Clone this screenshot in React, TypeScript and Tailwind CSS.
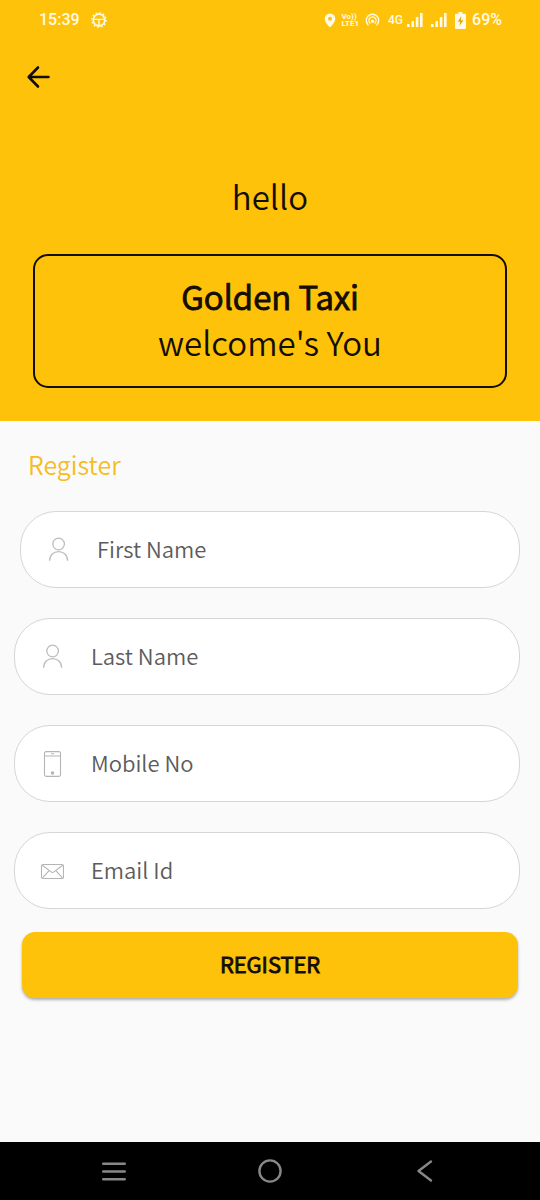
import type { ReactNode } from "react";

function GearIcon() {
  return (
    <svg width="16" height="16" viewBox="0 0 16 16" fill="none" stroke="#fffae8" aria-hidden="true">
      <circle cx="8" cy="8" r="5.8" strokeWidth="1.7" />
      <circle cx="8" cy="8" r="7.2" strokeWidth="1.2" strokeDasharray="1.885 1.885" />
      <path d="M2.5 7.4H13.5M8 7.4V13.5" strokeWidth="1.4" />
    </svg>
  );
}

function PinIcon() {
  return (
    <svg width="12" height="15" viewBox="0 0 12 15" aria-hidden="true">
      <path
        d="M6 .5A5.3 5.3 0 0 0 .7 5.8C.7 9.5 6 14.5 6 14.5s5.3-5 5.3-8.7A5.3 5.3 0 0 0 6 .5Zm0 3.3a2 2 0 1 1 0 4 2 2 0 0 1 0-4Z"
        fill="#fffae8"
        fillRule="evenodd"
      />
    </svg>
  );
}

function HotspotIcon() {
  return (
    <svg width="15" height="14" viewBox="0 0 16 14" fill="none" stroke="#fffae8" strokeWidth="1.4" strokeLinecap="round" aria-hidden="true">
      <path d="M3.2 12A6.6 6.6 0 1 1 12.8 12" />
      <path d="M5.3 10.2A3.8 3.8 0 1 1 10.7 10.2" />
      <circle cx="8" cy="8.2" r="1" fill="#fffae8" />
    </svg>
  );
}

function SignalIcon() {
  return (
    <svg width="16" height="14" viewBox="0 0 16 14" fill="#fffae8" aria-hidden="true">
      <rect x="0" y="11" width="2.6" height="3" />
      <rect x="4.4" y="8" width="2.6" height="6" />
      <rect x="8.8" y="4" width="2.6" height="10" />
      <rect x="13" y="0" width="2.6" height="14" />
    </svg>
  );
}

function BatteryIcon() {
  return (
    <svg width="11" height="17" viewBox="0 0 11 17" aria-hidden="true">
      <path d="M3.5 0h4v1.8H10a1 1 0 0 1 1 1V16a1 1 0 0 1-1 1H1a1 1 0 0 1-1-1V2.8a1 1 0 0 1 1-1h2.5Z" fill="#fffae8" />
      <path d="M6.3 4 2.8 9.8h2.3L4.6 14l3.7-5.8H5.9Z" fill="#e0a90c" />
    </svg>
  );
}

function PersonIcon() {
  return (
    <svg width="24" height="26" viewBox="0 0 24 26" fill="none" stroke="#bdbdbd" strokeWidth="1.3" aria-hidden="true">
      <circle cx="12.6" cy="7" r="5.8" />
      <path d="M3.6 23.8C3.6 17.8 7.6 14.6 12.6 14.6S21.6 17.8 21.6 23.8" />
    </svg>
  );
}

function PhoneIcon() {
  return (
    <svg width="24" height="26" viewBox="0 0 24 26" fill="none" stroke="#b5b5b5" strokeWidth="1.1" aria-hidden="true">
      <rect x="4.5" y=".6" width="16" height="24.8" rx="1.6" />
      <path d="M4.5 5H20.5M11 2.8H14" />
      <circle cx="12.5" cy="22" r="1.2" fill="#b5b5b5" />
    </svg>
  );
}

function MailIcon() {
  return (
    <svg width="24" height="26" viewBox="0 0 24 26" fill="none" stroke="#b5b5b5" strokeWidth="1.1" aria-hidden="true">
      <rect x="1.5" y="6.5" width="22" height="14" rx="1.6" />
      <path d="M2.3 7.3 11.1 13.9Q12.5 15.1 13.9 13.9L22.7 7.3M2.5 19.9 9.1 12.7M22.5 19.9 15.9 12.7" />
    </svg>
  );
}

type FieldProps = { id: string; label: string; type: string; icon: ReactNode; inset?: boolean };

function Field({ id, label, type, icon, inset }: FieldProps) {
  return (
    <div
      className={`${inset ? "ml-[6px]" : ""} flex h-[77px] items-center gap-[27px] rounded-[36px] border border-[#d6d6d6] bg-white pr-6 pl-[25px]`}
    >
      <label htmlFor={id} aria-label={label} className="shrink-0">
        {icon}
      </label>
      <input
        id={id}
        type={type}
        placeholder={label}
        className="h-10 min-w-0 flex-1 bg-transparent pb-1 text-[22px] font-[350] text-[#444] outline-none placeholder:text-[#5c5c5c]"
      />
    </div>
  );
}

export default function App() {
  return (
    <div className="flex min-h-screen flex-col bg-[#fafafa] font-['Noto_Sans_CJK_SC','Noto_Sans',sans-serif] text-[#140d02]">
      <header className="bg-[#ffc20a] pb-[33px]">
        <div className="flex h-10 items-center justify-between pr-[38px] pl-[39px] font-[Roboto,sans-serif] text-[#fffae8]">
          <div className="flex items-center gap-[11px]">
            <span className="text-base font-medium">15:39</span>
            <GearIcon />
          </div>
          <div className="flex items-center">
            <PinIcon />
            <span className="mr-1.5 ml-1.5 flex flex-col text-[8px] leading-[7px] font-bold">
              <span>Vo))</span>
              <span>LTE1</span>
            </span>
            <HotspotIcon />
            <span className="mr-1 ml-2 text-xs font-medium">4G</span>
            <SignalIcon />
            <span className="mr-2 ml-2">
              <SignalIcon />
            </span>
            <BatteryIcon />
            <span className="ml-1.5 text-base font-medium">69%</span>
          </div>
        </div>
        <button type="button" aria-label="Back" className="mt-[25px] ml-[26px] block">
          <svg width="24" height="24" viewBox="0 0 24 24" fill="none" stroke="#140d02" strokeWidth="2.6" strokeLinecap="round" strokeLinejoin="round" aria-hidden="true">
            <path d="M22.5 12H3M12 2.5 2.7 12 12 21.5" />
          </svg>
        </button>
        <p className="mt-[84px] text-center text-[33px] leading-[46px] font-[350]">hello</p>
        <div className="mx-[33px] mt-[35px] rounded-[15px] border-2 border-[#140d02] pt-[17px] pb-[21px] text-center text-[33px] leading-[46px]">
          <h1 className="font-[350] [-webkit-text-stroke:1px]">Golden Taxi</h1>
          <p className="font-[350]">welcome's You</p>
        </div>
      </header>

      <main className="flex-1">
        <h2 className="mt-[25px] ml-7 text-[25px] leading-9 font-[350] text-[#f5bd1f]">Register</h2>
        <form onSubmit={(event) => event.preventDefault()}>
          <div className="mt-[29px] mr-5 ml-3.5 flex flex-col gap-[30px]">
            <Field id="first-name" label="First Name" type="text" icon={<PersonIcon />} inset />
            <Field id="last-name" label="Last Name" type="text" icon={<PersonIcon />} />
            <Field id="mobile" label="Mobile No" type="tel" icon={<PhoneIcon />} />
            <Field id="email" label="Email Id" type="email" icon={<MailIcon />} />
          </div>
          <div className="mt-[23px] px-[22px]">
            <button
              type="submit"
              className="block h-[66px] w-full rounded-[13px] bg-[#ffc20a] pb-1 text-[22px] font-[350] shadow-[0_2px_3px_rgba(0,0,0,0.3)] [-webkit-text-stroke:1px]"
            >
              REGISTER
            </button>
          </div>
        </form>
      </main>

      <nav className="flex h-[58px] items-center justify-between bg-black px-[100px]">
        <button type="button" aria-label="Recent apps">
          <svg width="28" height="28" viewBox="0 0 28 28" stroke="#888" strokeWidth="2.6" strokeLinecap="round" aria-hidden="true">
            <path d="M3.3 6.8H24.7M3.3 14.5H24.7M3.3 22.2H24.7" />
          </svg>
        </button>
        <button type="button" aria-label="Home">
          <svg width="28" height="28" viewBox="0 0 28 28" fill="none" stroke="#888" strokeWidth="2.4" aria-hidden="true">
            <circle cx="14" cy="14" r="10.6" />
          </svg>
        </button>
        <button type="button" aria-label="Go back">
          <svg width="28" height="28" viewBox="0 0 28 28" fill="none" stroke="#888" strokeWidth="2.4" strokeLinecap="round" strokeLinejoin="round" aria-hidden="true">
            <path d="M19 4.5 6.5 14 19 23.5" />
          </svg>
        </button>
      </nav>
    </div>
  );
}
